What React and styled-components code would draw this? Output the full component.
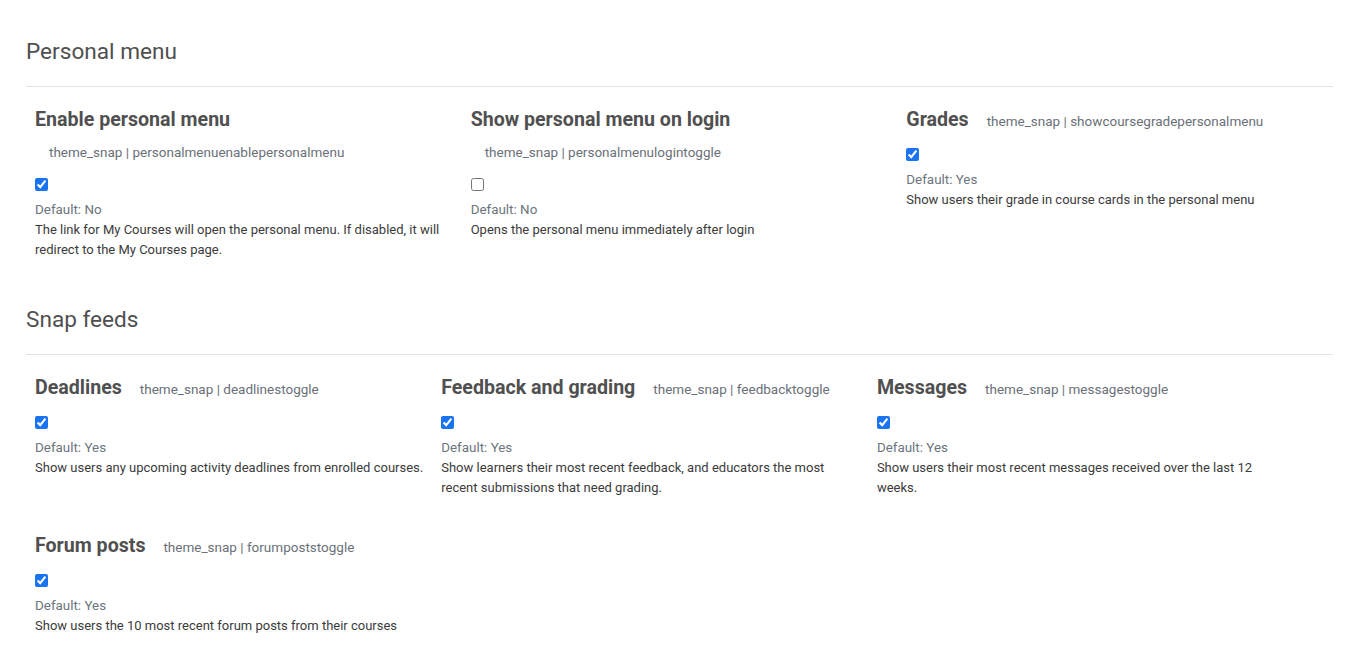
import React from "react";
import styled, { createGlobalStyle } from "styled-components";

const GlobalStyle = createGlobalStyle`
    body {
        margin: 0;
        background: #fff;
        font-family: Roboto, "Liberation Sans", sans-serif;
        color: #3a3a3a;
    }
`

const Page = styled.div`
    padding: 39px 22px 0 26px;
`

const Section = styled.section`
    & + & {
        margin-top: 47px;
    }
`

const Legend = styled.h2`
    margin: 0 0 21px;
    padding-bottom: 21px;
    border-bottom: 1px solid #e3e3e3;
    font-size: 22.6px;
    line-height: 26px;
    font-weight: 400;
    color: #4f4f4f;
`

const Grid = styled.div`
    display: flex;
    flex-wrap: wrap;
    row-gap: 36px;
`

const Setting = styled.div`
    flex: 0 0 auto;
    box-sizing: border-box;
    max-width: 33.333%;
    padding: 0 9px;
`

const Header = styled.div`
    display: flex;
    flex-wrap: wrap;
    align-items: baseline;
    gap: 10px 4px;
    margin-bottom: 12px;
`

const Title = styled.h3`
    margin: 0;
    font-size: 19.6px;
    line-height: 24px;
    font-weight: 700;
    color: #505050;
`

const Name = styled.span`
    padding-left: 14px;
    font-size: 13.5px;
    line-height: 20px;
    color: #6a7078;
`

const CheckRow = styled.div`
    display: flex;
    align-items: center;
    height: 20px;
    margin-bottom: 6px;
`

const Check = styled.input`
    width: 13px;
    height: 13px;
    margin: 0;
    accent-color: #1a73f0;
`

const Default = styled.div`
    font-size: 13.4px;
    line-height: 20px;
    color: #6c757d;
`

const Description = styled.div`
    font-size: 13px;
    line-height: 20px;
    color: #3b3b3b;
`

const sections = [
    {
        title: "Personal menu",
        settings: [
            {
                title: "Enable personal menu",
                name: "personalmenuenablepersonalmenu",
                checked: true,
                def: "No",
                desc: "The link for My Courses will open the personal menu. If disabled, it will redirect to the My Courses page."
            },
            {
                title: "Show personal menu on login",
                name: "personalmenulogintoggle",
                checked: false,
                def: "No",
                desc: "Opens the personal menu immediately after login"
            },
            {
                title: "Grades",
                name: "showcoursegradepersonalmenu",
                checked: true,
                def: "Yes",
                desc: "Show users their grade in course cards in the personal menu"
            }
        ]
    },
    {
        title: "Snap feeds",
        settings: [
            {
                title: "Deadlines",
                name: "deadlinestoggle",
                checked: true,
                def: "Yes",
                desc: "Show users any upcoming activity deadlines from enrolled courses."
            },
            {
                title: "Feedback and grading",
                name: "feedbacktoggle",
                checked: true,
                def: "Yes",
                desc: "Show learners their most recent feedback, and educators the most recent submissions that need grading."
            },
            {
                title: "Messages",
                name: "messagestoggle",
                checked: true,
                def: "Yes",
                desc: "Show users their most recent messages received over the last 12 weeks."
            },
            {
                title: "Forum posts",
                name: "forumpoststoggle",
                checked: true,
                def: "Yes",
                desc: "Show users the 10 most recent forum posts from their courses"
            }
        ]
    }
]

const App = () => {
    return (
        <Page>
            <GlobalStyle />
            {sections.map(section => (
                <Section key={section.title}>
                    <Legend>{section.title}</Legend>
                    <Grid>
                        {section.settings.map(s => (
                            <Setting key={s.name}>
                                <Header>
                                    <Title>{s.title}</Title>
                                    <Name>theme_snap | {s.name}</Name>
                                </Header>
                                <CheckRow>
                                    <Check type="checkbox" defaultChecked={s.checked} />
                                </CheckRow>
                                <Default>Default: {s.def}</Default>
                                <Description>{s.desc}</Description>
                            </Setting>
                        ))}
                    </Grid>
                </Section>
            ))}
        </Page>
    )
}

export default App;
